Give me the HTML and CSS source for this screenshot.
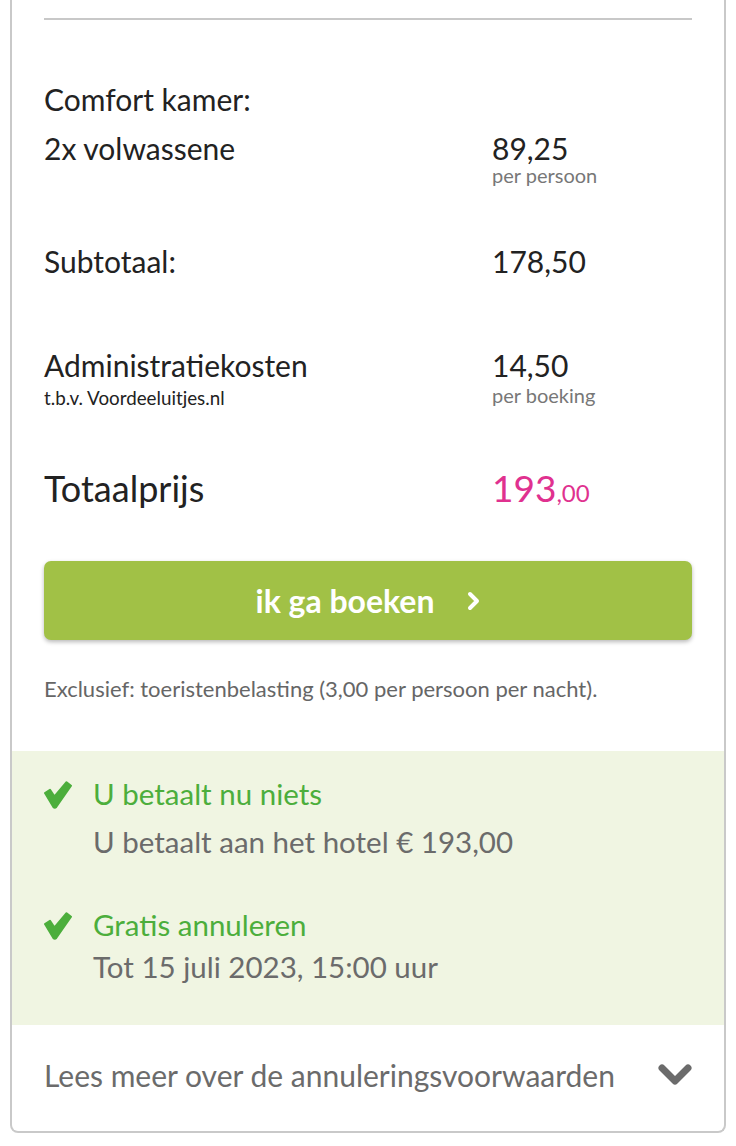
FILE: index.html
```html
<!DOCTYPE html>
<html lang="nl">
<head>
<meta charset="utf-8">
<title>Prijsoverzicht</title>
<link rel="stylesheet" href="styles.css">
</head>
<body>
<div class="card">
  <div class="pricing">
    <div class="sep"></div>
    <div class="room">Comfort kamer:</div>
    <div class="row first">
      <div class="label">2x volwassene</div>
      <div class="amount">
        <div class="val">89,25</div>
        <div class="unit">per persoon</div>
      </div>
    </div>
    <div class="row subtotal">
      <div class="label">Subtotaal:</div>
      <div class="amount"><div class="val">178,50</div></div>
    </div>
    <div class="row admin">
      <div class="label">
        <div>Administratiekosten</div>
        <div class="sub">t.b.v. Voordeeluitjes.nl</div>
      </div>
      <div class="amount">
        <div class="val">14,50</div>
        <div class="unit">per boeking</div>
      </div>
    </div>
    <div class="row total">
      <div class="label">Totaalprijs</div>
      <div class="amount price">193<span class="cents">,00</span></div>
    </div>
    <button class="book" type="button">
      <span>ik ga boeken</span>
      <svg class="chev-r" width="13" height="20" viewBox="0 0 13 20"><polyline points="3,3 10,10 3,17" fill="none" stroke="#fff" stroke-width="4" stroke-linecap="round" stroke-linejoin="round"/></svg>
    </button>
    <p class="note">Exclusief: toeristenbelasting (3,00 per persoon per nacht).</p>
  </div>
  <div class="perks">
    <div class="perk">
      <svg class="check" width="28" height="28" viewBox="0 0 28 28"><path d="M1 12 L6 8.8 L10.5 15.5 L22.5 1.2 L27 4.8 L12.2 26 Q10.8 27.6 9.4 26 Z" fill="#4cae3c" stroke="#4cae3c" stroke-width="2" stroke-linejoin="round"/></svg>
      <div class="perk-body">
        <div class="perk-title">U betaalt nu niets</div>
        <div class="perk-text one">U betaalt aan het hotel € 193,00</div>
      </div>
    </div>
    <div class="perk second">
      <svg class="check" width="28" height="28" viewBox="0 0 28 28"><path d="M1 12 L6 8.8 L10.5 15.5 L22.5 1.2 L27 4.8 L12.2 26 Q10.8 27.6 9.4 26 Z" fill="#4cae3c" stroke="#4cae3c" stroke-width="2" stroke-linejoin="round"/></svg>
      <div class="perk-body">
        <div class="perk-title">Gratis annuleren</div>
        <div class="perk-text two">Tot 15 juli 2023, 15:00 uur</div>
      </div>
    </div>
  </div>
  <div class="more">
    <span>Lees meer over de annuleringsvoorwaarden</span>
    <svg class="chev-d" width="34" height="22" viewBox="0 0 34 22"><polyline points="4,4 17,17 30,4" fill="none" stroke="#6b6b6b" stroke-width="7" stroke-linecap="round" stroke-linejoin="round"/></svg>
  </div>
</div>
</body>
</html>
```

FILE: styles.css
```css
* { box-sizing: border-box; }
html, body { margin: 0; padding: 0; background: #fff; }
body {
  font-family: Lato, "Noto Sans", sans-serif;
  color: #222;
}
.card {
  margin-left: 10px;
  width: 716px;
  border: 2px solid #c9c9c9;
  border-top: none;
  border-radius: 0 0 8px 8px;
  overflow: hidden;
  background: #fff;
}
.pricing {
  padding: 18px 32px 49px;
}
.sep {
  height: 2px;
  background: #c8c8c8;
}
.room {
  margin-top: 61px;
  font-size: 30px;
  line-height: 36px;
}
.row {
  display: grid;
  grid-template-columns: 448px 1fr;
  font-size: 30px;
  line-height: 36px;
}
.row.first { margin-top: 13px; }
.row.subtotal { margin-top: 59px; }
.row.admin { margin-top: 68px; }
.row.total { margin-top: 58px; font-size: 36px; line-height: 44px; }
.unit {
  font-size: 20px;
  line-height: 18px;
  color: #777;
}
.admin .unit { margin-top: 3px; }
.sub {
  font-size: 18.8px;
  line-height: 20px;
  margin-top: 5px;
}
.price {
  color: #e0318f;
  font-size: 37px;
}
.cents { font-size: 24px; }
.book {
  margin-top: 46px;
  width: 100%;
  height: 79px;
  border: none;
  border-radius: 7px;
  background: #a1c146;
  box-shadow: 0 2px 4px rgba(0, 0, 0, 0.28);
  color: #fff;
  font-family: Lato, "Noto Sans", sans-serif;
  font-weight: 700;
  font-size: 32px;
  display: flex;
  align-items: center;
  justify-content: center;
  gap: 33px;
  padding: 0;
}
.chev-r { display: block; }
.note {
  margin: 36px 0 0;
  font-size: 22px;
  line-height: 26px;
  color: #666;
}
.perks {
  background: #f0f5e2;
  padding: 26px 32px 41px;
}
.perk {
  display: grid;
  grid-template-columns: 49px 1fr;
  font-size: 29.5px;
  line-height: 34px;
}
.perk.second { margin-top: 49px; }
.check { margin-top: 4px; display: block; }
.perk-title { color: #4cae3c; }
.perk-text { color: #6b6b6b; }
.perk-text.one { margin-top: 14px; }
.perk-text.two { margin-top: 8px; }
.more {
  display: flex;
  justify-content: space-between;
  align-items: center;
  padding: 33px 32px 39px;
  font-size: 30px;
  line-height: 34px;
  color: #6b6b6b;
}
.chev-d { display: block; }
```
